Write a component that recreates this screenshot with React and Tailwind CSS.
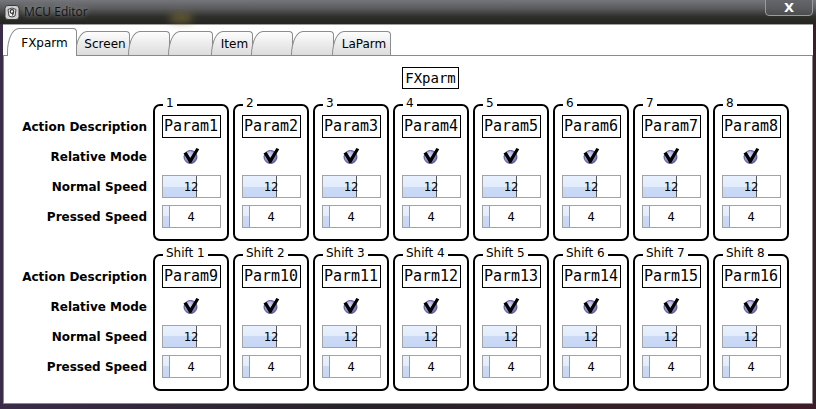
import React from "react";

const TABS = [
  { label: "FXparm", w: "w-[70px]", sel: true },
  { label: "Screen", w: "w-[55px]" },
  { label: "", w: "w-[42px]" },
  { label: "", w: "w-[45px]" },
  { label: "Item", w: "w-[42px]" },
  { label: "", w: "w-[42px]" },
  { label: "", w: "w-[43px]" },
  { label: "LaParm", w: "w-[59px]" },
];

const ROWS = [
  {
    titles: ["1", "2", "3", "4", "5", "6", "7", "8"],
    names: ["Param1", "Param2", "Param3", "Param4", "Param5", "Param6", "Param7", "Param8"],
  },
  {
    titles: ["Shift 1", "Shift 2", "Shift 3", "Shift 4", "Shift 5", "Shift 6", "Shift 7", "Shift 8"],
    names: ["Param9", "Parm10", "Parm11", "Parm12", "Parm13", "Parm14", "Parm15", "Parm16"],
  },
];

const mono = "font-['DejaVu_Sans_Mono','Liberation_Mono',monospace]";

function TitleBar() {
  return (
    <div className="relative h-[24px] bg-[linear-gradient(180deg,#74767b_0%,#5a5b5d_35%,#2e2e2b_70%,#242420_100%)] flex items-center pl-[4px]">
      <svg width="17" height="17" viewBox="0 0 17 17" className="shrink-0">
        <rect x="1" y="1.5" width="14" height="14" rx="3" fill="#cfcfcf" stroke="#3a3a3a" />
        <path d="M4 5.5 Q8 2.5 12 5.5 L11 12 Q8 14 5 12 Z" fill="#f4f4f4" stroke="#444" strokeWidth="1" />
        <circle cx="8" cy="7.5" r="1.8" fill="none" stroke="#333" strokeWidth="1.2" />
        <path d="M9.5 8 L8.5 11.5" stroke="#333" strokeWidth="1.2" />
      </svg>
      <span className="ml-[3px] text-[12px] text-[#101418] font-['Open_Sans',sans-serif] [text-shadow:0_0_5px_rgba(255,255,255,0.55)]">
        MCU Editor
      </span>
      <div className="absolute top-0 left-[170px] w-[22px] h-[8px] mt-[14px] rounded-full bg-[#8a7a3a] blur-[4px] opacity-70" />
      <div className="absolute top-[-1px] right-[3px] w-[48px] h-[17px] rounded-b-[4px] border border-[#9a9aa0] bg-[#5a5b60]/60 flex items-center justify-center">
        <span className="text-[13px] leading-[14px] font-bold text-white font-['DejaVu_Sans',sans-serif]">X</span>
      </div>
    </div>
  );
}

function Tabs() {
  return (
    <div className="h-[30px] flex items-end pl-[4px]">
      {TABS.map((t, i) => (
        <div
          key={i}
          className={
            "border border-b-0 border-[#8c8c8c] rounded-tl-[12px_24px] rounded-tr-[4px] flex items-center justify-center text-[12px] text-black pl-[5px] " +
            t.w +
            (i > 0 ? " -ml-[2px]" : "") +
            (t.sel
              ? " h-[28px] -mb-[1px] relative z-10 bg-white pt-[1px]"
              : " h-[24px] bg-[linear-gradient(180deg,#fdfdfd,#e9e9e9_60%,#dcdcdc)]")
          }
        >
          {t.label}
        </div>
      ))}
    </div>
  );
}

function Check() {
  return (
    <svg width="18" height="18" viewBox="0 0 18 18">
      <defs>
        <radialGradient id="cbg" cx="40%" cy="35%" r="70%">
          <stop offset="0" stopColor="#e2e2fa" />
          <stop offset="0.55" stopColor="#9c9cda" />
          <stop offset="1" stopColor="#5c5ca4" />
        </radialGradient>
      </defs>
      <circle cx="8.5" cy="9" r="6.5" fill="url(#cbg)" stroke="#55558e" strokeWidth="1" />
      <path d="M1.5 5.2 L4.6 4 L8.3 10 L14.4 0 L17.2 1.3 L9.2 15 L7.4 15 Z" fill="#000" />
    </svg>
  );
}

function Speed({ value, fill }) {
  return (
    <div className="relative w-[59px] h-[23px] border border-[#a3a3a3] bg-white flex items-center justify-center">
      <div
        className={
          "absolute left-0 top-0 bottom-0 bg-[linear-gradient(180deg,#e9f1fe_0%,#e3ecfc_50%,#cbdaf6_50%,#c6d6f4_100%)] border-r " +
          fill
        }
      />
      <span className={"relative text-[12px] leading-none text-black " + mono}>{value}</span>
    </div>
  );
}

function Group({ title, name }) {
  return (
    <div className="relative w-[76px] h-[137px] border-2 border-black rounded-[7px] pt-[9px] flex flex-col items-center">
      <span className="absolute -top-[10px] left-[8px] px-[3px] bg-white text-[12px] leading-[14px] text-black">
        {title}
      </span>
      <div className={"w-[59px] h-[23px] border border-black flex justify-center text-[15px] leading-[20px] text-black " + mono}>
        {name}
      </div>
      <div className="h-[37px] flex items-center justify-center">
        <Check />
      </div>
      <Speed value="12" fill="w-[34px] border-[#5a5a5a]" />
      <div className="mt-[7px]">
        <Speed value="4" fill="w-[7px] border-[#9c9c9c]" />
      </div>
    </div>
  );
}

function Labels() {
  const cls = "flex items-center justify-end text-[12px] font-bold text-black";
  return (
    <div className="w-[143px] pt-[11px] flex flex-col">
      <div className={cls + " h-[23px]"}>Action Description</div>
      <div className={cls + " h-[37px]"}>Relative Mode</div>
      <div className={cls + " h-[23px]"}>Normal Speed</div>
      <div className={cls + " h-[23px] mt-[7px]"}>Pressed Speed</div>
    </div>
  );
}

export default function App() {
  return (
    <div className="w-[816px] h-[409px] overflow-hidden bg-[linear-gradient(90deg,#3b2c47,#262228_45%,#3d1d29)] font-['DejaVu_Sans','Liberation_Sans',sans-serif]">
      <TitleBar />
      <div className="mx-[3px] h-[380px] bg-white border-t border-[#a0a0a0] flex flex-col">
        <Tabs />
        <div className="flex-1 border border-[#8a8a8a] bg-white flex flex-col">
          <div className={"mt-[11px] ml-[398px] w-[57px] h-[22px] border border-black flex items-center justify-center text-[14px] leading-none text-black " + mono}>
            FXparm
          </div>
          {ROWS.map((row, r) => (
            <div key={r} className={"flex " + (r === 0 ? "mt-[15px]" : "mt-[13px]")}>
              <Labels />
              <div className="ml-[6px] flex gap-[4px]">
                {row.titles.map((t, i) => (
                  <Group key={i} title={t} name={row.names[i]} />
                ))}
              </div>
            </div>
          ))}
        </div>
      </div>
    </div>
  );
}
